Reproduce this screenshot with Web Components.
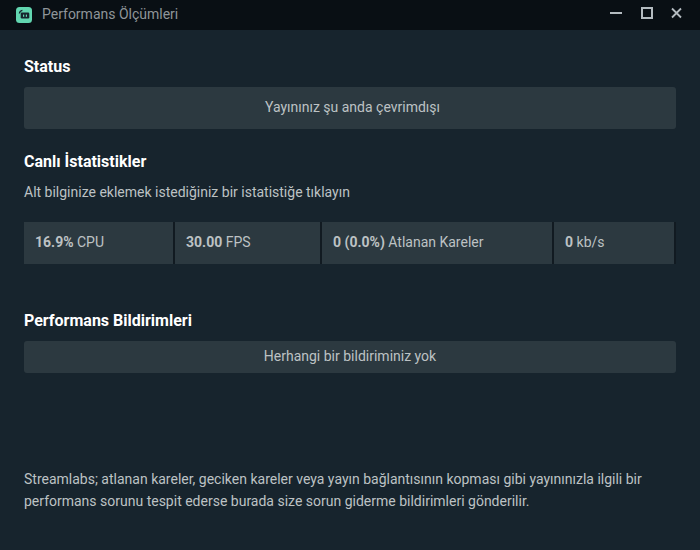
<!DOCTYPE html>
<html>
<head>
<meta charset="utf-8">
<style>
  html, body { margin: 0; height: 100%; background: #17242d; }
  body { font-family: Roboto, "Noto Sans", sans-serif; overflow: hidden; }
</style>
</head>
<body>
<perf-window>
  <perf-titlebar>Performans Ölçümleri</perf-titlebar>
  <perf-section top="27" gap="10" heading="Status">
    <perf-notice size="42" shift="5">Yayınınız şu anda çevrimdışı</perf-notice>
  </perf-section>
  <perf-section top="23" gap="20" heading="Canlı İstatistikler" note="Alt bilginize eklemek istediğiniz bir istatistiğe tıklayın">
    <perf-stats>
      <perf-stat width="151" value="16.9%">CPU</perf-stat>
      <perf-stat width="147" value="30.00">FPS</perf-stat>
      <perf-stat width="232" value="0 (0.0%)">Atlanan Kareler</perf-stat>
      <perf-stat width="122" value="0">kb/s</perf-stat>
    </perf-stats>
  </perf-section>
  <perf-section top="47" gap="10" heading="Performans Bildirimleri">
    <perf-notice size="32">Herhangi bir bildiriminiz yok</perf-notice>
  </perf-section>
  <perf-footer>Streamlabs; atlanan kareler, geciken kareler veya yayın bağlantısının kopması gibi yayınınızla ilgili bir performans sorunu tespit ederse burada size sorun giderme bildirimleri gönderilir.</perf-footer>
</perf-window>

<script>
class PerfWindow extends HTMLElement {
  constructor() {
    super();
    this.attachShadow({ mode: "open" });
    this.shadowRoot.innerHTML = `
      <style>
        :host { display: flex; flex-direction: column; height: 550px; width: 700px; color: #fff; }
      </style>
      <slot></slot>
    `;
  }
}

class PerfTitlebar extends HTMLElement {
  constructor() {
    super();
    this.attachShadow({ mode: "open" });
    this.shadowRoot.innerHTML = `
      <style>
        :host { display: flex; align-items: center; height: 30px; background: #090f14; color: #8f9599; font-size: 14px; padding-left: 16px; flex: none; }
        .logo { width: 16px; height: 16px; margin-right: 10px; flex: none; }
        .title { flex: 1; margin-top: -2px; }
        .buttons { display: flex; align-items: center; padding-right: 18px; margin-top: -4px; }
        .max { margin: 0 18px 0 19px; }
        svg { display: block; }
      </style>
      <svg class="logo" viewBox="0 0 16 16">
        <rect width="16" height="16" rx="3.5" fill="#62d6b0"/>
        <path d="M3.4 6.5 C3.6 4.8 4.8 3.6 6.4 3.3" stroke="#17242d" stroke-width="1.3" fill="none"/>
        <rect x="4.7" y="5.5" width="8.6" height="6" rx="1.2" fill="#17242d"/>
        <rect x="7" y="7.6" width="1.2" height="2.2" fill="#62d6b0"/>
        <rect x="9.8" y="7.6" width="1.2" height="2.2" fill="#62d6b0"/>
      </svg>
      <span class="title"><slot></slot></span>
      <div class="buttons">
        <svg width="12" height="12" viewBox="0 0 12 12"><path d="M0 6h12" stroke="#b4bbc0" stroke-width="2"/></svg>
        <svg class="max" width="12" height="12" viewBox="0 0 12 12"><rect x="1" y="1" width="10" height="10" fill="none" stroke="#b4bbc0" stroke-width="2"/></svg>
        <svg width="11" height="12" viewBox="0 0 11 12"><path d="M1 1.5l9 9M10 1.5l-9 9" stroke="#b4bbc0" stroke-width="1.8"/></svg>
      </div>
    `;
  }
}

class PerfSection extends HTMLElement {
  constructor() {
    super();
    this.attachShadow({ mode: "open" });
  }
  connectedCallback() {
    const note = this.getAttribute("note");
    this.shadowRoot.innerHTML = `
      <style>
        :host { display: block; padding: 0 24px; margin-top: ${this.getAttribute("top")}px; }
        h2 { margin: 0; font-size: 16px; font-weight: 700; line-height: 20px; color: #fff; }
        p { margin: 10px 0 0; font-size: 14px; line-height: 20px; color: #bdc2c4; }
        .body { margin-top: ${this.getAttribute("gap")}px; }
      </style>
      <h2>${this.getAttribute("heading")}</h2>
      ${note ? `<p>${note}</p>` : ""}
      <div class="body"><slot></slot></div>
    `;
  }
}

class PerfNotice extends HTMLElement {
  constructor() {
    super();
    this.attachShadow({ mode: "open" });
  }
  connectedCallback() {
    const shift = this.getAttribute("shift") || 0;
    this.shadowRoot.innerHTML = `
      <style>
        :host { display: flex; align-items: center; justify-content: center; box-sizing: border-box; height: ${this.getAttribute("size")}px; padding: 0 0 2px ${shift}px; background: #2c3940; border-radius: 3px; font-size: 14px; color: #bdc2c4; }
      </style>
      <span><slot></slot></span>
    `;
  }
}

class PerfStats extends HTMLElement {
  constructor() {
    super();
    this.attachShadow({ mode: "open" });
    this.shadowRoot.innerHTML = `
      <style>
        :host { display: flex; height: 42px; }
      </style>
      <slot></slot>
    `;
  }
}

class PerfStat extends HTMLElement {
  constructor() {
    super();
    this.attachShadow({ mode: "open" });
  }
  connectedCallback() {
    this.shadowRoot.innerHTML = `
      <style>
        :host { display: flex; align-items: center; box-sizing: border-box; width: ${this.getAttribute("width")}px; height: 42px; padding: 0 0 2px 11px; background: #2c3940; border-right: 2px solid #111a21; font-size: 14px; color: #bdc2c4; white-space: pre; }
        b { font-weight: 700; }
      </style>
      <span><b>${this.getAttribute("value")}</b> <slot></slot></span>
    `;
  }
}

class PerfFooter extends HTMLElement {
  constructor() {
    super();
    this.attachShadow({ mode: "open" });
    this.shadowRoot.innerHTML = `
      <style>
        :host { display: block; margin-top: 95px; padding: 0 24px; font-size: 14px; line-height: 22px; color: #bdc2c4; }
      </style>
      <slot></slot>
    `;
  }
}

customElements.define("perf-window", PerfWindow);
customElements.define("perf-titlebar", PerfTitlebar);
customElements.define("perf-section", PerfSection);
customElements.define("perf-notice", PerfNotice);
customElements.define("perf-stats", PerfStats);
customElements.define("perf-stat", PerfStat);
customElements.define("perf-footer", PerfFooter);
</script>
</body>
</html>
